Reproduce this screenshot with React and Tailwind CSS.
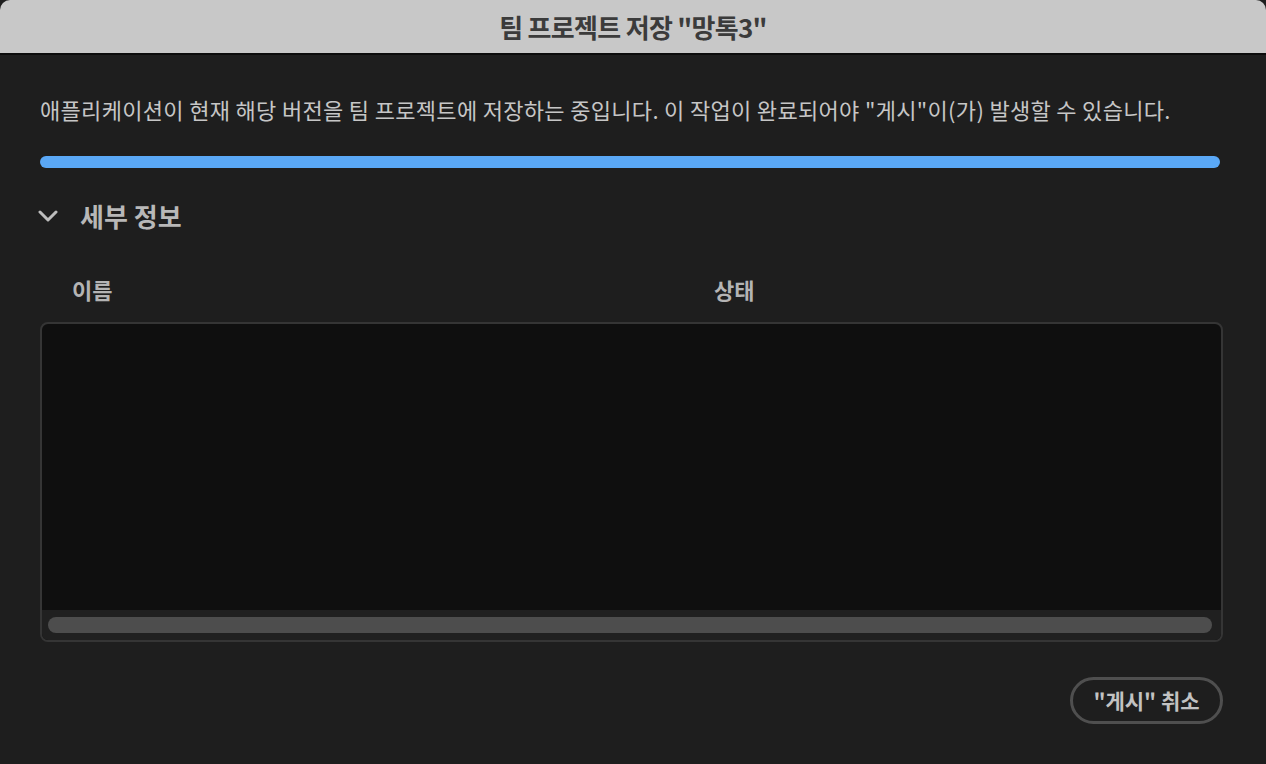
const font = { fontFamily: '"Noto Sans CJK KR", "Noto Sans", sans-serif' };

export default function App() {
  return (
    <div
      className="w-[1266px] h-[764px] bg-[#1e1e1e] flex flex-col overflow-hidden"
      style={font}
    >
      <div className="h-[55px] shrink-0 bg-[#c8c8c8] border-b-2 border-[#0c0c0c] rounded-t-[10px] flex items-center justify-center">
        <h1 className="text-[26px] leading-[30px] font-bold text-[#3b3b3b] tracking-[-0.7px]">
          팀 프로젝트 저장 "망톡3"
        </h1>
      </div>

      <div className="flex flex-col px-[40px] pt-[39px]">
        <p className="text-[22px] leading-[30px] tracking-[0.32px] text-[#c6c6c6] whitespace-nowrap">
          애플리케이션이 현재 해당 버전을 팀 프로젝트에 저장하는 중입니다. 이 작업이 완료되어야 "게시"이(가) 발생할 수 있습니다.
        </p>

        <div className="mt-[32px] mr-[6px] h-[12px] rounded-full bg-[#5aa8f6]" />

        <div className="mt-[30px] h-[36px] flex items-center gap-[22px]">
          <svg width="20" height="12" viewBox="0 0 20 12" className="-ml-[2px] text-[#bdbdbd]">
            <path d="M2 2 L10 10 L18 2" fill="none" stroke="currentColor" strokeWidth="3" strokeLinecap="round" strokeLinejoin="round" />
          </svg>
          <span className="text-[26px] leading-[36px] font-bold text-[#b8b8b8]">세부 정보</span>
        </div>

        <div className="mt-[40px] flex text-[22px] leading-[30px] font-bold text-[#b4b4b4]">
          <span className="w-[674px] pl-[32px]">이름</span>
          <span>상태</span>
        </div>

        <div className="mt-[18px] mr-[3px] h-[320px] border-2 border-[#353535] rounded-[8px] bg-[#0f0f0f] flex flex-col overflow-hidden">
          <div className="flex-1" />
          <div className="h-[30px] bg-[#202020] flex items-center pl-[6px] pr-[9px]">
            <div className="h-[16px] w-full rounded-full bg-[#4d4d4d]" />
          </div>
        </div>

        <div className="mt-[35px] mr-[3px] flex justify-end">
          <button className="h-[47px] w-[153px] rounded-full border-[3px] border-[#4f4f4f] text-[21px] font-bold text-[#c2c2c2] flex items-center justify-center">
            "게시" 취소
          </button>
        </div>
      </div>
    </div>
  );
}
